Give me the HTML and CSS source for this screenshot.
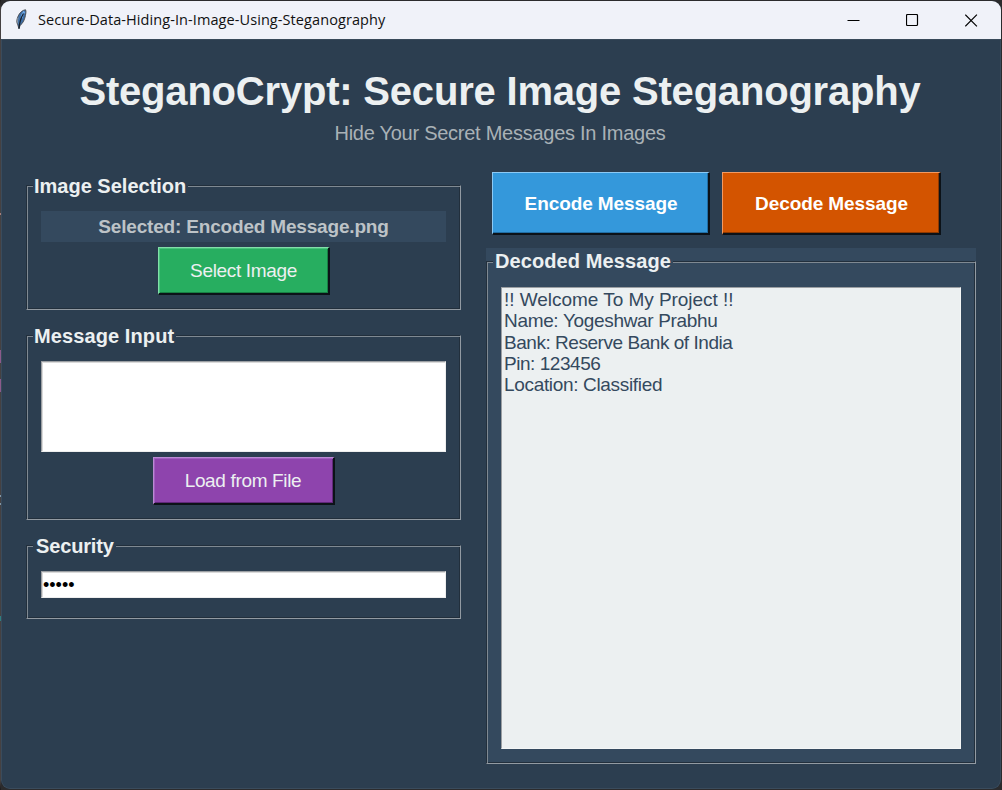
FILE: index.html
```html
<!DOCTYPE html>
<html lang="en">
<head>
<meta charset="utf-8">
<title>Secure-Data-Hiding-In-Image-Using-Steganography</title>
<link rel="stylesheet" href="styles.css">
</head>
<body>
<div class="window">
  <div class="titlebar">
    <svg class="feather" width="12" height="21" viewBox="0 0 12 21">
      <path d="M10.600 .8C7.500 1 4.500 4 3 7.500 1.800 10.500 1.200 13 2.800 15.800L4 19.800 5 16.500C8 14.500 9.800 10 10.400 6.500 10.700 4.500 11.300 3 10.600 .8Z" fill="#3f6fa6" stroke="#4a4d52" stroke-width="1"/>
      <path d="M9.300 2.500C7.800 4.500 7 6 6.500 9" stroke="#6da7e6" stroke-width="2.200" fill="none"/>
      <path d="M8.500 4.500C6 8.500 4.500 12 4 19.500" stroke="#15202e" stroke-width="1.300" fill="none"/>
      <path d="M3.200 8.500C2.400 11 2.300 13 3 14.500" stroke="#9aa3ad" stroke-width=".9" fill="none"/>
    </svg>
    <span class="caption">Secure-Data-Hiding-In-Image-Using-Steganography</span>
    <div class="controls">
      <svg width="13" height="13" viewBox="0 0 13 13"><path d="M.5 6.500H12.500" stroke="#000" stroke-width="1"/></svg>
      <svg width="13" height="13" viewBox="0 0 13 13"><rect x=".5" y=".5" width="11" height="11" rx="1" fill="none" stroke="#000" stroke-width="1.200"/></svg>
      <svg width="13" height="13" viewBox="0 0 13 13"><path d="M.3 .7L11.900 12.300M11.900 .7L.3 12.300" stroke="#000" stroke-width="1.200"/></svg>
    </div>
  </div>
  <div class="content">
    <h1 class="title">SteganoCrypt: Secure Image Steganography</h1>
    <p class="subtitle">Hide Your Secret Messages In Images</p>
    <div class="columns">
      <div class="left">
        <section class="group group-image">
          <h2 class="legend">Image Selection</h2>
          <div class="selected">Selected: Encoded Message.png</div>
          <button class="btn select">Select Image</button>
        </section>
        <section class="group group-input">
          <h2 class="legend legend-input">Message Input</h2>
          <div class="message-box"></div>
          <button class="btn load">Load from File</button>
        </section>
        <section class="group group-security">
          <h2 class="legend legend-security">Security</h2>
          <div class="password">•••••</div>
        </section>
      </div>
      <div class="right">
        <div class="actions">
          <button class="btn encode">Encode Message</button>
          <button class="btn decode">Decode Message</button>
        </div>
        <div class="panel">
          <section class="group group-decoded">
            <h2 class="legend legend-decoded">Decoded Message</h2>
            <div class="output">
              <div class="line">!! Welcome To My Project !!</div>
              <div class="line tight">Name: Yogeshwar Prabhu</div>
              <div class="line tighter">Bank: Reserve Bank of India</div>
              <div class="line tighter">Pin: 123456</div>
              <div class="line tight">Location: Classified</div>
            </div>
          </section>
        </div>
      </div>
    </div>
  </div>
</div>
</body>
</html>
```
FILE: styles.css
```css
* { box-sizing: border-box; }
html { background: #1c1b1c; }
/* The gradient draws slivers of the desktop along the window's left edge. */
body {
  margin: 0;
  width: 1002px;
  height: 790px;
  overflow: hidden;
  padding: 1px;
  font-family: "Liberation Sans", Arial, sans-serif;
  background: linear-gradient(to bottom,
    #1c1b1c 0, #454142 10px 213px, #a77f7c 213px 215px, #454142 215px 350px,
    #8c5a8c 350px 363px, #454142 363px 379px, #8c5a8c 379px 392px,
    #454142 392px 495px, #8296a5 495px 497px, #454142 497px 503px,
    #8296a5 503px 505px, #454142 505px 616px, #2f7f80 616px 621px,
    #454142 621px 780px, #1c1b1c 790px) 0 0 / 1px 790px no-repeat, #2b2b2d;
}
.window {
  height: 788px;
  display: flex;
  flex-direction: column;
  border-radius: 9px;
  overflow: hidden;
  background: #2c3e50;
}
.titlebar {
  height: 38px;
  flex: none;
  display: flex;
  align-items: center;
  padding-left: 14px;
  background: #f0f2f9;
  color: #111;
}
.feather { display: block; margin-top: -1px; }
.caption {
  margin-left: 11px;
  font: 14.5px/20px "Open Sans", "Noto Sans", sans-serif;
  letter-spacing: 0.08px;
  white-space: nowrap;
}
.controls {
  margin-left: auto;
  margin-right: 23px;
  display: flex;
  gap: 46px;
}
.controls svg { display: block; }
.content {
  flex: 1;
  padding: 28px 25px 0;
  border: 1px solid #3a4b5c;
  border-top-color: #394a5a;
  border-radius: 0 0 9px 9px;
}
.title {
  margin: 0 -19px 0 -21px;
  font-size: 40px;
  line-height: 46px;
  font-weight: bold;
  letter-spacing: -0.2px;
  text-align: center;
  color: #ecf0f1;
  white-space: nowrap;
}
.subtitle {
  margin: 7px 1px 0 -1px;
  font-size: 20px;
  line-height: 24px;
  letter-spacing: -0.26px;
  text-align: center;
  color: #a9b1b6;
}
.columns {
  display: flex;
  gap: 25px;
  margin: 27px -1px 0 -1px;
}
.left {
  width: 435px;
  flex: none;
  padding-top: 13px;
  display: flex;
  flex-direction: column;
  gap: 25px;
}
.group {
  display: flex;
  flex-direction: column;
  align-items: center;
  padding: 0 14px;
  border: 1px solid;
  border-color: #222f3c #929aa2 #929aa2 #222f3c;
  box-shadow: inset 1px 1px 0 #7f8992, inset -1px -1px 0 #222f3c;
}
.group-image { height: 125px; }
.group-input { height: 185px; }
.group-security { height: 74px; }
.legend {
  align-self: flex-start;
  height: 24px;
  margin: -12px 0 0 -8px;
  padding: 0 2px 0 1px;
  font-size: 20px;
  line-height: 24px;
  font-weight: bold;
  color: #ecf0f1;
  background: #2c3e50;
  white-space: nowrap;
}
.legend-input { letter-spacing: 0.1px; }
.legend-security { padding-left: 3px; letter-spacing: -0.15px; }
.selected {
  align-self: stretch;
  height: 31px;
  margin-top: 13px;
  font-size: 19px;
  line-height: 31px;
  font-weight: bold;
  letter-spacing: -0.18px;
  text-align: center;
  color: #bdc3c7;
  background: #34495e;
}
.btn {
  flex: none;
  height: 48px;
  margin: 5px 0 0;
  padding: 0;
  font: 19px/44px "Liberation Sans", Arial, sans-serif;
  letter-spacing: -0.34px;
  color: #ecf0f1;
  border: 1px solid;
  border-right: 2px solid #0c1218;
  border-bottom: 2px solid #0c1218;
  border-radius: 0;
}
.select {
  width: 172px;
  padding: 1px 0 0 1px;
  background: #27ae60;
  border-top-color: #82dfa9;
  border-left-color: #82dfa9;
  box-shadow: inset 1px 1px 0 #49c27c, inset -1px -1px 0 #188044;
}
.message-box {
  align-self: stretch;
  height: 91px;
  margin-top: 13px;
  background: #fff;
  border: 1px solid #eee;
  border-top-color: #9b9fa3;
  border-left-color: #9b9fa3;
  box-shadow: inset 1px 1px 0 #dadada;
}
.load {
  width: 182px;
  padding-top: 1px;
  background: #8e44ad;
  border-top-color: #bb8ad4;
  border-left-color: #bb8ad4;
  box-shadow: inset 1px 1px 0 #a05fbe, inset -1px -1px 0 #60287a;
}
.password {
  align-self: stretch;
  height: 27px;
  margin-top: 13px;
  padding-left: 1px;
  font-size: 18px;
  line-height: 27px;
  color: #000;
  background: #fff;
  border: 1px solid #eee;
  border-top-color: #9b9fa3;
  border-left-color: #9b9fa3;
  box-shadow: inset 1px 1px 0 #dadada;
}
.right { width: 490px; flex: none; }
.actions {
  display: flex;
  gap: 12px;
  padding-left: 6px;
}
.actions .btn {
  height: 63px;
  margin: 0;
  padding: 2px 0 0 1px;
  font-weight: bold;
  line-height: 58px;
  letter-spacing: -0.1px;
  color: #fff;
}
.actions .encode {
  width: 218px;
  background: #3498db;
  border-top-color: #8ccaf5;
  border-left-color: #8ccaf5;
  box-shadow: inset -1px -1px 0 #226fa5;
}
.actions .decode {
  width: 219px;
  background: #d35400;
  border-top-color: #f29a61;
  border-left-color: #f29a61;
  box-shadow: inset -1px -1px 0 #8f3900;
}
.panel {
  margin-top: 13px;
  padding-top: 13px;
  background: #34495e;
}
.group-decoded { height: 503px; }
.legend-decoded {
  padding-left: 2px;
  line-height: 23px;
  letter-spacing: 0.1px;
  background: #34495e;
}
.output {
  align-self: stretch;
  height: 462px;
  margin-top: 13px;
  padding: 1px 0 0 2px;
  font-size: 19px;
  line-height: 21.25px;
  color: #34495e;
  background: #ecf0f1;
  border: 1px solid #f4f6f6;
  border-top-color: #9b9fa3;
  border-left-color: #9b9fa3;
}
.line { letter-spacing: -0.04px; }
.tight { letter-spacing: -0.33px; }
.tighter { letter-spacing: -0.46px; }
```
